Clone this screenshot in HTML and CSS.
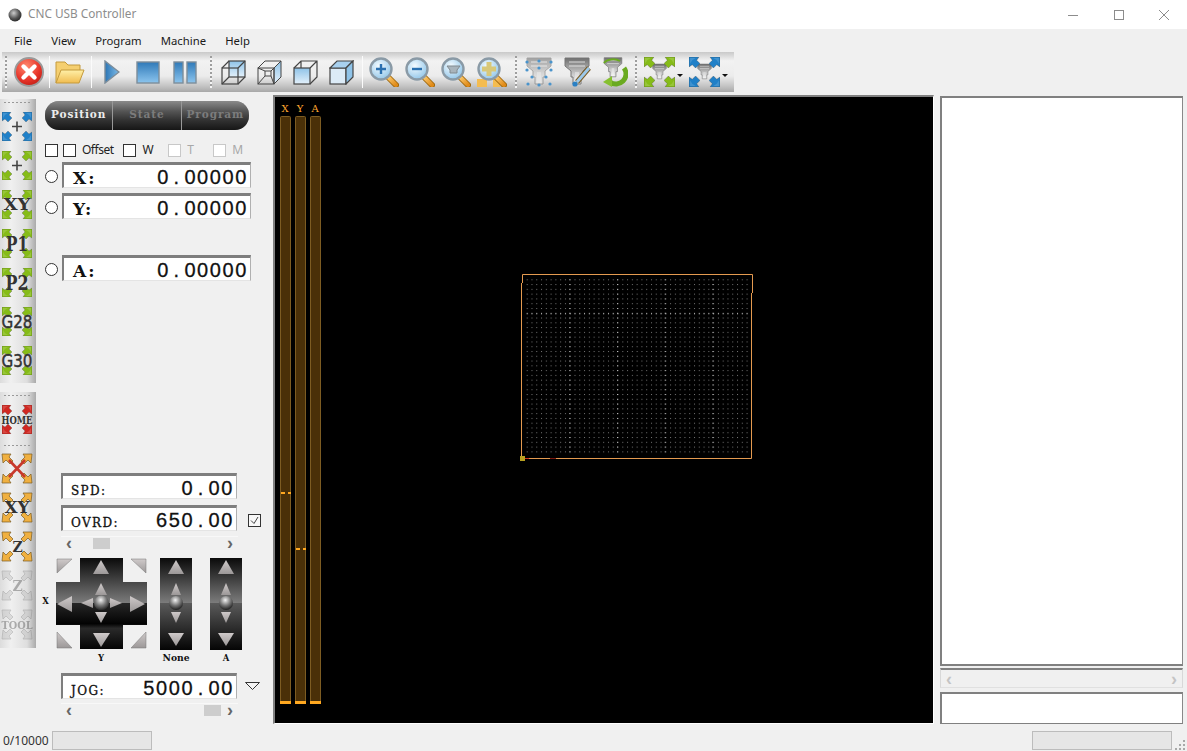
FILE: index.html
```html
<!DOCTYPE html>
<html lang="en">
<head>
<meta charset="utf-8">
<title>CNC USB Controller</title>
<link rel="stylesheet" href="styles.css">
</head>
<body>
<svg class="defs" aria-hidden="true">
  <defs>
    <linearGradient id="gBlue" x1="0" y1="0" x2="0" y2="1"><stop offset="0" stop-color="#2f79b8"/><stop offset="1" stop-color="#8cc5ee"/></linearGradient>
    <linearGradient id="gBlueH" x1="0" y1="0" x2="1" y2="0"><stop offset="0" stop-color="#2c75b4"/><stop offset="1" stop-color="#7dbbe8"/></linearGradient>
    <linearGradient id="gFace" x1="0" y1="0" x2="0" y2="1"><stop offset="0" stop-color="#8fc3e8"/><stop offset="1" stop-color="#e4f1fb"/></linearGradient>
    <linearGradient id="gFolder" x1="0" y1="0" x2="0" y2="1"><stop offset="0" stop-color="#fff0a8"/><stop offset="1" stop-color="#f0bc50"/></linearGradient>
    <radialGradient id="gRed" cx=".4" cy=".3" r=".8"><stop offset="0" stop-color="#ff8a70"/><stop offset=".6" stop-color="#e8352a"/><stop offset="1" stop-color="#b81810"/></radialGradient>
    <radialGradient id="gLens" cx=".4" cy=".35" r=".7"><stop offset="0" stop-color="#f4fbff"/><stop offset="1" stop-color="#8ec4e8"/></radialGradient>
    <linearGradient id="gHandle" x1="0" y1="0" x2="1" y2="1"><stop offset="0" stop-color="#ffd27a"/><stop offset="1" stop-color="#e08a18"/></linearGradient>
    <linearGradient id="gTool" x1="0" y1="0" x2="0" y2="1"><stop offset="0" stop-color="#6e6e6e"/><stop offset=".6" stop-color="#c8c8c8"/><stop offset="1" stop-color="#f0f0f0"/></linearGradient>
    <linearGradient id="gUp" gradientUnits="userSpaceOnUse" x1="0" y1="558" x2="0" y2="603"><stop offset="0" stop-color="#0a0a0a"/><stop offset="1" stop-color="#7c7c7c"/></linearGradient>
    <linearGradient id="gDown" gradientUnits="userSpaceOnUse" x1="0" y1="603" x2="0" y2="649"><stop offset="0" stop-color="#262626"/><stop offset=".45" stop-color="#030303"/><stop offset=".55" stop-color="#2a2a2a"/><stop offset="1" stop-color="#050505"/></linearGradient>
    <linearGradient id="gStripDown" gradientUnits="userSpaceOnUse" x1="0" y1="603" x2="0" y2="650"><stop offset="0" stop-color="#5a5a5a"/><stop offset="1" stop-color="#050505"/></linearGradient>
    <linearGradient id="gTri" x1="0" y1="0" x2="0" y2="1"><stop offset="0" stop-color="#cfcaca"/><stop offset="1" stop-color="#9c9898"/></linearGradient>
    <radialGradient id="gBall" cx=".45" cy=".3" r=".75"><stop offset="0" stop-color="#f2f2f2"/><stop offset=".5" stop-color="#777"/><stop offset="1" stop-color="#111"/></radialGradient>
    <radialGradient id="gApp" cx=".4" cy=".35" r=".7"><stop offset="0" stop-color="#ccc"/><stop offset=".6" stop-color="#555"/><stop offset="1" stop-color="#222"/></radialGradient>
    <pattern id="dots" patternUnits="userSpaceOnUse" x="251.7" y="182.3" width="4.78" height="4.78"><rect width="1" height="1" fill="#747474"/></pattern>
    <pattern id="dotsCol" patternUnits="userSpaceOnUse" x="294.3" y="182.3" width="47.7" height="4.78"><rect width="1" height="1" fill="#c4c4c4"/></pattern>
    <pattern id="dotsRow" patternUnits="userSpaceOnUse" x="251.7" y="216.3" width="4.78" height="400"><rect width="1" height="1" fill="#c4c4c4"/></pattern>

    <symbol id="ar" viewBox="0 0 10 10"><polygon points="0,0 9,0 7,3 10,6 6,10 3,7 0,9" fill="currentColor" stroke="#4a4a4a" stroke-opacity=".5" stroke-width=".6"/><polygon points="1,1 6,1 3,3 1,6" fill="#fff" opacity=".15"/></symbol>
    <symbol id="four" viewBox="0 0 36 39">
      <use href="#ar" x="2" y="5" width="10" height="10"/>
      <use href="#ar" width="10" height="10" transform="translate(32 5) scale(-1 1)"/>
      <use href="#ar" width="10" height="10" transform="translate(2 34) scale(1 -1)"/>
      <use href="#ar" width="10" height="10" transform="translate(32 34) scale(-1 -1)"/>
    </symbol>
    <symbol id="dia" viewBox="0 0 36 39">
      <g fill="#f0b040" stroke="#7a5a20" stroke-width=".7">
        <polygon points="2,5 11,5 9,8 13,12 10,15 6,11 3,14"/>
        <polygon points="32,5 23,5 25,8 21,12 24,15 28,11 31,14"/>
        <polygon points="2,34 11,34 9,31 13,27 10,24 6,28 3,25"/>
        <polygon points="32,34 23,34 25,31 21,27 24,24 28,28 31,25"/>
      </g>
    </symbol>
    <symbol id="nozzle" viewBox="0 0 30 30">
      <path d="M3 1h24v8l-6 5v6h-2v7h-8v-7H9v-6L3 9z" fill="url(#gTool)" stroke="#777" stroke-width="1"/>
      <path d="M7 5h16M7 9h16M14 15v11M16 15v11" stroke="#fff" stroke-width="1" opacity=".7"/>
    </symbol>
    <symbol id="mag" viewBox="0 0 30 30">
      <path d="M18 19l9 9" stroke="#a06a10" stroke-width="6" stroke-linecap="round"/>
      <path d="M18 19l9 9" stroke="url(#gHandle)" stroke-width="4" stroke-linecap="round"/>
      <circle cx="12" cy="12" r="10.5" fill="url(#gLens)" stroke="#8a9aa6" stroke-width="2.4"/>
    </symbol>
  </defs>
</svg>

<header class="titlebar">
  <svg class="app-icon" width="14" height="14" viewBox="0 0 14 14"><circle cx="7" cy="7" r="6.5" fill="url(#gApp)"/></svg>
  <span class="title">CNC USB Controller</span>
  <div class="winctl">
    <button class="winbtn"><svg width="10" height="10" viewBox="0 0 10 10"><path d="M0 5.5h10" stroke="#8c8c8c"/></svg></button>
    <button class="winbtn"><svg width="10" height="10" viewBox="0 0 10 10"><rect x=".5" y=".5" width="9" height="9" fill="none" stroke="#8c8c8c"/></svg></button>
    <button class="winbtn"><svg width="10" height="10" viewBox="0 0 10 10"><path d="M0 0l10 10M10 0L0 10" stroke="#8c8c8c"/></svg></button>
  </div>
</header>

<nav class="menubar">
  <span>File</span><span>View</span><span>Program</span><span>Machine</span><span>Help</span>
</nav>

<div class="toolbar">
  <span class="grip"></span>
  <svg class="ti close" width="30" height="30" viewBox="0 0 30 30"><circle cx="15" cy="15" r="14" fill="url(#gRed)" stroke="#9a9a9a" stroke-width="2"/><path d="M9.5 9.5l11 11M20.5 9.5l-11 11" stroke="#fff" stroke-width="4.4" stroke-linecap="round"/></svg>
  <span class="sep s1"></span>
  <svg class="ti folder" width="30" height="26" viewBox="0 0 30 26"><path d="M1 24V3h9l3 3h12v5" fill="#f5cf70" stroke="#c49a3c"/><path d="M1 24l5-13h23l-5 13z" fill="url(#gFolder)" stroke="#c49a3c"/></svg>
  <span class="sep s2"></span>
  <svg class="ti play" width="16" height="24" viewBox="0 0 16 24"><polygon points="1,1 15,12 1,23" fill="url(#gBlueH)" stroke="#7d8d9a" stroke-width="1.4"/></svg>
  <svg class="ti stop" width="24" height="23" viewBox="0 0 24 23"><rect x="1" y="1" width="22" height="21" fill="url(#gBlue)" stroke="#7d8d9a" stroke-width="1.4"/></svg>
  <svg class="ti pause" width="24" height="23" viewBox="0 0 24 23"><rect x="1" y="1" width="9" height="21" fill="url(#gBlue)" stroke="#7d8d9a" stroke-width="1.4"/><rect x="14" y="1" width="9" height="21" fill="url(#gBlue)" stroke="#7d8d9a" stroke-width="1.4"/></svg>
  <span class="grip g2"></span>
  <svg class="ti cube c1" width="25" height="25" viewBox="0 0 25 25"><g fill="none" stroke="#444" stroke-width="1.2"><rect x="8" y="1" width="16" height="16" fill="url(#gFace)"/><rect x="1" y="8" width="16" height="16"/><path d="M1 8l7-7M17 8l7-7M17 24l7-7M1 24l7-7"/></g></svg>
  <svg class="ti cube" width="25" height="25" viewBox="0 0 25 25"><g fill="none" stroke="#444" stroke-width="1"><path d="M17 8l7-7v16l-7 7z" fill="url(#gFace)"/><rect x="1" y="8" width="16" height="16"/><path d="M1 8l7-7h16M1 24l7-8M17 24l-3-8M8 11h6v5H8zM17 8l-3 3M1 8l7 3"/></g></svg>
  <svg class="ti cube" width="25" height="25" viewBox="0 0 25 25"><g fill="none" stroke="#444" stroke-width="1.2"><rect x="1" y="8" width="16" height="16" fill="url(#gFace)"/><path d="M1 8l7-7h16v16l-7 7M17 8l7-7M8 1v7"/></g></svg>
  <svg class="ti cube" width="25" height="25" viewBox="0 0 25 25"><g stroke="#444" stroke-width="1.2"><rect x="1" y="8" width="16" height="16" fill="#dcebf7"/><path d="M1 8l7-7h16l-7 7z" fill="#a8d0ee"/><path d="M17 8l7-7v16l-7 7z" fill="#8fc3e8"/></g></svg>
  <span class="sep s3"></span>
  <svg class="ti mg m1" width="30" height="30" viewBox="0 0 30 30"><use href="#mag" width="30" height="30"/><path d="M7 12h10M12 7v10" stroke="#2a70b0" stroke-width="2.4"/></svg>
  <svg class="ti mg" width="30" height="30" viewBox="0 0 30 30"><use href="#mag" width="30" height="30"/><path d="M7 12h10" stroke="#2a70b0" stroke-width="2.4"/></svg>
  <svg class="ti mg" width="30" height="30" viewBox="0 0 30 30"><use href="#mag" width="30" height="30"/><path d="M6 9h13l-3 4v3H9v-3z" fill="#a8b4bc" stroke="#808a90"/></svg>
  <svg class="ti mg" width="30" height="30" viewBox="0 0 30 30"><rect x="0" y="22" width="10" height="8" fill="#f4bc50"/><rect x="16" y="22" width="7" height="8" fill="#f4bc50"/><use href="#mag" width="30" height="30"/><path d="M12 5v14M5 12h14" stroke="#d8c878" stroke-width="5"/></svg>
  <span class="grip g3"></span>
  <svg class="ti nz n1" width="30" height="30" viewBox="0 0 30 30"><use href="#nozzle" width="30" height="30" opacity=".6"/><g fill="#4a94cc"><circle cx="3" cy="5" r="1.6"/><circle cx="27" cy="5" r="1.6"/><circle cx="15" cy="4" r="1.6"/><circle cx="3" cy="13" r="1.6"/><circle cx="27" cy="13" r="1.6"/><circle cx="8" cy="20" r="1.6"/><circle cx="22" cy="20" r="1.6"/><circle cx="15" cy="11" r="1.6"/><circle cx="4" cy="27" r="1.6"/><circle cx="15" cy="28" r="1.6"/><circle cx="26" cy="27" r="1.6"/></g></svg>
  <svg class="ti nz" width="30" height="30" viewBox="0 0 30 30"><use href="#nozzle" width="30" height="30"/><path d="M27 11L15 25" stroke="#7a5a20" stroke-width="5"/><path d="M27 11L15 25" stroke="#9cc8ea" stroke-width="3"/><circle cx="13" cy="27" r="2.6" fill="#2a80c4"/></svg>
  <svg class="ti nz n3" width="30" height="30" viewBox="0 0 30 30"><use href="#nozzle" width="26" height="22" x="2" y="0"/><path d="M26 11a10 10 0 0 1-14 14" fill="none" stroke="#6aaa20" stroke-width="5"/><polygon points="14,19 14,30 5,25" fill="#86c030"/><path d="M6 6a10 6 0 0 1 16-2" fill="none" stroke="#6aaa20" stroke-width="2"/></svg>
  <span class="grip g4"></span>
  <svg class="ti nav green" width="31" height="30" viewBox="0 0 31 30"><use href="#nozzle" x="7" y="5" width="17" height="20"/><use href="#ar" x="0" y="0" width="11" height="11"/><use href="#ar" width="11" height="11" transform="translate(31 0) scale(-1 1)"/><use href="#ar" width="11" height="11" transform="translate(0 30) scale(1 -1)"/><use href="#ar" width="11" height="11" transform="translate(31 30) scale(-1 -1)"/></svg>
  <span class="caret"></span>
  <svg class="ti nav blue" width="31" height="30" viewBox="0 0 31 30"><use href="#nozzle" x="7" y="5" width="17" height="20"/><use href="#ar" x="0" y="0" width="11" height="11"/><use href="#ar" width="11" height="11" transform="translate(31 0) scale(-1 1)"/><use href="#ar" width="11" height="11" transform="translate(0 30) scale(1 -1)"/><use href="#ar" width="11" height="11" transform="translate(31 30) scale(-1 -1)"/></svg>
  <span class="caret"></span>
</div>

<main class="main">
  <aside class="rail">
    <div class="railgroup rg1">
      <span class="railgrip"></span>
      <svg class="rb blue" viewBox="0 0 36 39"><use href="#four" width="36" height="39"/><path d="M12 19.500h10M17 14.500v10" stroke="#444" stroke-width="1.6"/></svg>
      <svg class="rb green" viewBox="0 0 36 39"><use href="#four" width="36" height="39"/><path d="M12 19.500h10M17 14.500v10" stroke="#444" stroke-width="1.6"/></svg>
      <svg class="rb green" viewBox="0 0 36 39"><use href="#four" width="36" height="39"/><text class="rt serif" x="17" y="25" textLength="27" lengthAdjust="spacingAndGlyphs">XY</text></svg>
      <svg class="rb green" viewBox="0 0 36 39"><use href="#four" width="36" height="39"/><text class="rt serif big" x="17" y="27" textLength="22" lengthAdjust="spacingAndGlyphs">P1</text></svg>
      <svg class="rb green" viewBox="0 0 36 39"><use href="#four" width="36" height="39"/><text class="rt serif big" x="17" y="27" textLength="23" lengthAdjust="spacingAndGlyphs">P2</text></svg>
      <svg class="rb green" viewBox="0 0 36 39"><use href="#four" width="36" height="39"/><text class="rt sans" x="17" y="26" textLength="31" lengthAdjust="spacingAndGlyphs">G28</text></svg>
      <svg class="rb green" viewBox="0 0 36 39"><use href="#four" width="36" height="39"/><text class="rt sans" x="17" y="26" textLength="31" lengthAdjust="spacingAndGlyphs">G30</text></svg>
    </div>
    <div class="railgroup rg2">
      <span class="railgrip"></span>
      <svg class="rb red" viewBox="0 0 36 39"><use href="#four" width="36" height="39"/><text class="rt serif small" x="17" y="23.500" textLength="31" lengthAdjust="spacingAndGlyphs">HOME</text></svg>
      <span class="railgrip g-mid"></span>
      <svg class="rb" viewBox="0 0 36 39"><use href="#dia" width="36" height="39"/><path d="M9 11l16 17M25 11L9 28" stroke="#c8382c" stroke-width="2.6"/></svg>
      <svg class="rb" viewBox="0 0 36 39"><use href="#dia" width="36" height="39"/><text class="rt serif" x="17" y="25" textLength="25" lengthAdjust="spacingAndGlyphs">XY</text></svg>
      <svg class="rb" viewBox="0 0 36 39"><use href="#dia" width="36" height="39"/><text class="rt serif z" x="17.500" y="25">Z</text></svg>
      <svg class="rb off" viewBox="0 0 36 39"><use href="#dia" width="36" height="39"/><text class="rt serif z" x="17.500" y="25">Z</text></svg>
      <svg class="rb off" viewBox="0 0 36 39"><use href="#dia" width="36" height="39"/><text class="rt serif small" x="17" y="23.500" textLength="31" lengthAdjust="spacingAndGlyphs">TOOL</text></svg>
    </div>
  </aside>

  <section class="panel">
    <div class="tabs">
      <span class="tab active">Position</span>
      <span class="tab">State</span>
      <span class="tab">Program</span>
    </div>
    <div class="checks">
      <span class="cb"></span>
      <span class="cb"></span>
      <span class="cl">Offset</span>
      <span class="cb w"></span>
      <span class="cl">W</span>
      <span class="cb dis t"></span>
      <span class="cl dis">T</span>
      <span class="cb dis m"></span>
      <span class="cl dis">M</span>
    </div>
    <div class="axes">
      <div class="axis"><span class="radio"></span><div class="lcd"><span class="lbl">X:</span><span class="val">0<i>.</i>00000</span></div></div>
      <div class="axis"><span class="radio"></span><div class="lcd"><span class="lbl">Y:</span><span class="val">0<i>.</i>00000</span></div></div>
      <div class="axis axis-a"><span class="radio"></span><div class="lcd"><span class="lbl">A:</span><span class="val">0<i>.</i>00000</span></div></div>
    </div>
    <div class="lower">
      <div class="lcd wide"><span class="lbl sm">SPD:</span><span class="val">0<i>.</i>00</span></div>
      <div class="ovrd">
        <div class="lcd wide"><span class="lbl sm">OVRD:</span><span class="val">650<i>.</i>00</span></div>
        <svg class="tick" width="13" height="13" viewBox="0 0 13 13"><rect x=".5" y=".5" width="12" height="12" fill="#f8f8f8" stroke="#333"/><path d="M3 6.500l3 3 4-6.500" fill="none" stroke="#444"/></svg>
      </div>
      <div class="hs"><span class="chev">‹</span><span class="thumb th1"></span><span class="chev">›</span></div>
      <svg class="pad" width="205" height="110" viewBox="40 555 205 110">
        <path d="M80 558h43v24h24v21H56v-21h24z" fill="url(#gUp)"/>
        <path d="M56 603h91v22h-24v24H80v-24H56z" fill="url(#gDown)"/>
        <g fill="url(#gTri)" stroke="#777" stroke-width=".5">
          <polygon points="57,559 72,559 57,573"/>
          <polygon points="131,559 146,559 146,573"/>
          <polygon points="57,632 72,648 57,648"/>
          <polygon points="146,632 146,648 131,648"/>
        </g>
        <g fill="url(#gTri)">
          <polygon points="101,560 109,574 93,574"/>
          <polygon points="101,583 107,595 95,595"/>
          <polygon points="93,633 110,633 101,647"/>
          <polygon points="95,612 107,612 101,623"/>
          <polygon points="57,604 72,596 72,612"/>
          <polygon points="145,604 130,596 130,612"/>
          <polygon points="81,603 93,598 93,608"/>
          <polygon points="122,603 110,598 110,608"/>
        </g>
        <circle cx="101.500" cy="603" r="7.500" fill="url(#gBall)"/>
        <g>
          <rect x="160" y="558" width="32" height="46" fill="url(#gUp)"/>
          <rect x="160" y="603" width="32" height="47" fill="url(#gStripDown)"/>
          <rect x="210" y="558" width="32" height="46" fill="url(#gUp)"/>
          <rect x="210" y="603" width="32" height="47" fill="url(#gStripDown)"/>
        </g>
        <g fill="url(#gTri)">
          <polygon points="176,560 184,574 168,574"/><polygon points="176,583 181,595 171,595"/><polygon points="171,612 181,612 176,623"/><polygon points="168,633 184,633 176,646"/>
          <polygon points="226,560 234,574 218,574"/><polygon points="226,583 231,595 221,595"/><polygon points="221,612 231,612 226,623"/><polygon points="218,633 234,633 226,646"/>
        </g>
        <circle cx="176" cy="603" r="7" fill="url(#gBall)"/>
        <circle cx="226" cy="603" r="7" fill="url(#gBall)"/>
        <text class="padt" x="45.500" y="604">X</text>
        <text class="padt" x="101" y="661">Y</text>
        <text class="padt" x="176" y="661" textLength="27" lengthAdjust="spacingAndGlyphs">None</text>
        <text class="padt" x="226" y="661">A</text>
      </svg>
      <div class="jogrow">
        <div class="lcd wide"><span class="lbl sm">JOG:</span><span class="val">5000<i>.</i>00</span></div>
        <svg class="dropdown" width="15" height="8" viewBox="0 0 15 8"><polygon points=".5,.5 14.500,.5 7.500,7.500" fill="#f4f4f4" stroke="#333"/></svg>
      </div>
      <div class="hs hs2"><span class="chev">‹</span><span class="thumb th2"></span><span class="chev">›</span></div>
    </div>
  </section>

  <section class="view">
    <svg class="scene" width="659" height="627" viewBox="0 0 659 627">
      <g>
        <rect class="bar" x="5.500" y="19.500" width="10" height="587" rx="1"/>
        <rect class="bar" x="20.500" y="19.500" width="10" height="587" rx="1"/>
        <rect class="bar" x="35.500" y="19.500" width="10" height="587" rx="1"/>
      </g>
      <g class="bar-end">
        <rect x="5" y="604" width="11" height="3"/><rect x="20" y="604" width="11" height="3"/><rect x="35" y="604" width="11" height="3"/>
        <rect x="6" y="395" width="4" height="2"/><rect x="13" y="395" width="3" height="2"/>
        <rect x="21" y="451" width="4" height="2"/><rect x="28" y="451" width="3" height="2"/>
      </g>
      <text class="bartxt" x="10" y="15">X</text>
      <text class="bartxt" x="25" y="15">Y</text>
      <text class="bartxt" x="40" y="15">A</text>
      <rect x="249" y="180" width="227" height="178" fill="url(#dots)"/>
      <rect x="249" y="180" width="227" height="178" fill="url(#dotsCol)"/>
      <rect x="249" y="180" width="227" height="178" fill="url(#dotsRow)"/>
      <path class="frame" d="M247.500 186V177.500H477.500V196M476.500 196V361.500H246.500V186"/>
      <rect x="245" y="359" width="5" height="5" fill="#b8a020"/>
      <rect x="250" y="361" width="4" height="1" fill="#d03020"/>
      <rect x="275" y="361" width="6" height="1" fill="#7a1810"/>
    </svg>
  </section>

  <aside class="side">
    <div class="list"></div>
    <div class="sidescroll"><span class="chev">‹</span><span class="chev">›</span></div>
    <div class="input"></div>
  </aside>
</main>

<footer class="status">
  <span class="count">0/10000</span>
  <span class="prog"></span>
  <span class="prog right"></span>
  <svg class="sizegrip" width="11" height="11" viewBox="0 0 11 11"><g fill="#a8a8a8"><rect x="8" y="1" width="2" height="2"/><rect x="4" y="5" width="2" height="2"/><rect x="8" y="5" width="2" height="2"/><rect x="0" y="9" width="2" height="2"/><rect x="4" y="9" width="2" height="2"/><rect x="8" y="9" width="2" height="2"/></g></svg>
</footer>
</body>
</html>
```

FILE: styles.css
```css
* { box-sizing: border-box; }
html, body { margin: 0; height: 100%; }
body {
  width: 1187px; height: 751px; overflow: hidden;
  display: flex; flex-direction: column;
  background: #f0f0f0; color: #111;
  font-family: "Noto Sans", "Liberation Sans", sans-serif; font-size: 12px;
}
.defs { position: absolute; width: 0; height: 0; }
svg { display: block; flex: none; }
.blue { color: #2080c8; }
.green { color: #86bc18; }
.red { color: #d02822; }

.titlebar { height: 29px; background: #fff; display: flex; align-items: center; padding-left: 8px; flex: none; }
.title { margin-left: 6px; padding-bottom: 3px; color: #8d8d8d; font-size: 11.800px; }
.winctl { margin-left: auto; display: flex; }
.winbtn { width: 45.500px; height: 29px; padding: 0; border: 0; background: none; display: flex; align-items: center; justify-content: center; }

.menubar { height: 23px; display: flex; align-items: center; gap: 19.200px; padding-left: 14px; padding-bottom: 1px; flex: none; color: #1a1a1a; font-size: 11.300px; }

.toolbar {
  width: 732px; height: 40px; margin-left: 2px; flex: none;
  display: flex; align-items: center;
  background: linear-gradient(#c9c9c9 0, #f2f2f2 22%, #ececec 60%, #c4c4c4 85%, #a8a8a8 100%);
}
.grip { width: 2px; height: 32px; margin-left: 3px; background: repeating-linear-gradient(#9e9e9e 0 2px, #f4f4f4 2px 4px); flex: none; }
.sep { width: 1px; height: 32px; background: #fbfbfb; flex: none; }
.close { margin-left: 7px; }
.s1 { margin-left: 5px; }
.folder { margin-left: 5px; }
.s2 { margin-left: 6px; }
.play { margin-left: 12px; }
.stop { margin-left: 16px; }
.pause { margin-left: 13px; }
.g2 { margin-left: 13px; }
.c1 { margin-left: 9px; }
.cube + .cube { margin-left: 11px; }
.s3 { margin-left: 8px; }
.m1 { margin-left: 6px; }
.mg + .mg { margin-left: 6px; }
.g3 { margin-left: 8px; }
.n1 { margin-left: 7px; }
.nz + .nz { margin-left: 8px; }
.nz + .nz.n3 { margin-left: 6px; }
.g4 { margin-left: 7px; }
.nav.green { margin-left: 7px; }
.nav.blue { margin-left: 6px; }
.caret { width: 0; height: 0; margin-left: 2px; margin-top: 7px; border: 3px solid transparent; border-top: 3px solid #111; border-bottom: 0; flex: none; }

.main { height: 635px; margin-top: 3px; display: flex; flex: none; }

.rail { width: 36px; display: flex; flex-direction: column; flex: none; padding-top: 4px; gap: 9px; }
.railgroup { background: linear-gradient(90deg, #dcdcdc 0, #f0f0f0 30%, #dedede 75%, #aaaaaa 100%); display: flex; flex-direction: column; }
.rg1 { height: 284px; padding-top: 8px; }
.rg2 { height: 256px; padding-top: 8px; }
.rb { width: 36px; height: 39px; flex: none; overflow: visible; }
.railgrip { height: 1px; margin: -5px 4px 4px; background: repeating-linear-gradient(90deg, #999 0 2px, transparent 2px 4px); flex: none; }
.rg2 .g-mid { margin: 6px 4px 3px; }
.rt { text-anchor: middle; fill: #333; }
.serif { font: bold 16px "DejaVu Serif", serif; }
.big { font-size: 20px; }
.small { font-size: 11px; }
.z { font-size: 14px; }
.sans { font: 18px "DejaVu Sans", sans-serif; fill: #333; stroke: #333; stroke-width: .5px; }
.off { opacity: .35; filter: grayscale(1); }

.panel { width: 237px; flex: none; padding: 6px 0 14px 9px; display: flex; flex-direction: column; }
.tabs { width: 204px; height: 29px; border-radius: 14px; overflow: hidden; display: flex; gap: 1px; background: #999; flex: none; }
.tab {
  flex: 1; display: flex; align-items: center; justify-content: center; padding-bottom: 2px;
  background: linear-gradient(#8a8a8a 0, #555 35%, #333 65%, #161616 100%);
  font: bold 10.500px/1 "DejaVu Serif", serif; letter-spacing: .9px; color: #7c7c7c;
}
.tab.active { color: #ececec; }
.checks { height: 13px; margin-top: 14px; display: flex; align-items: center; flex: none; }
.cb { width: 13px; height: 13px; border: 1px solid #333; background: #fff; flex: none; }
.cb + .cb { margin-left: 5px; }
.cl { margin-left: 6px; font-size: 12px; letter-spacing: -.5px; line-height: 12px; padding-bottom: 2px; color: #222; }
.cb.w { margin-left: 10px; }
.cb.t { margin-left: 15px; }
.cb.m { margin-left: 20px; }
.cb.dis { border-color: #c8c8c8; }
.cl.dis { color: #a8a8a8; }

.axes { margin-top: 5px; display: flex; flex-direction: column; gap: 5px; }
.axis { display: flex; align-items: flex-start; }
.axis-a { margin-top: 31px; }
.radio { width: 13px; height: 13px; margin-top: 8px; border: 1px solid #333; border-radius: 50%; background: #fff; flex: none; }
.lcd {
  width: 189px; height: 26px; margin-left: 4px; padding: 2px 2px 0 9px; flex: none;
  display: flex; justify-content: space-between; align-items: baseline;
  background: #fff;
  border-style: solid; border-width: 3px 1px 1px 2px;
  border-color: #7e7e7e #b0b0b0 #e4e4e4 #7e7e7e;
  line-height: 20px;
}
.lbl { font: bold 17px/20px "DejaVu Serif", serif; letter-spacing: 2px; color: #111; }
.val { font: 20px/20px "Liberation Sans", sans-serif; letter-spacing: 1.6px; color: #111; -webkit-text-stroke: .3px #111; }
.val i { font-style: normal; padding: 0 3.600px; }
.lbl.sm { font: 12px/20px "DejaVu Serif", serif; letter-spacing: 1.400px; -webkit-text-stroke: .3px #111; }

.lower { margin-top: auto; padding-left: 16px; display: flex; flex-direction: column; }
.wide { width: 176px; margin-left: 0; padding-left: 8px; }
.lower > .lcd { margin-bottom: 6px; }
.ovrd { display: flex; align-items: flex-start; }
.tick { margin: 9px 0 0 11px; }
.hs { width: 177px; height: 13px; margin-top: 5px; display: flex; align-items: center; justify-content: space-between; padding: 0 5px; border-top: 1px solid #f8f8f8; flex: none; }
.chev { font: bold 18px/12px "Liberation Sans", sans-serif; color: #666; width: 6px; text-align: center; }
.thumb { height: 11px; width: 17px; background: #cdcdcd; }
.th1 { margin: 0 auto 0 21px; }
.th2 { margin: 0 6px 0 auto; }
.hs2 { margin-top: 4px; }
.pad { margin: 6px 0 0 -21px; }
.padt { font: bold 8.500px "DejaVu Serif", serif; text-anchor: middle; fill: #111; }
.jogrow { margin-top: 8px; display: flex; align-items: flex-start; }
.dropdown { margin: 9px 0 0 8px; }

.view {
  width: 661px; height: 629px; flex: none; background: #000;
  border-style: solid; border-width: 2px 1px 1px 2px; border-color: #808080 #fff #fff #808080;
  overflow: hidden;
}
.bar { fill: #4a3008; stroke: #7d5c22; stroke-width: 1; }
.bar-end { fill: #ffa820; }
.bartxt { font: 10px "DejaVu Serif", serif; fill: #ffa830; text-anchor: middle; }
.frame { fill: none; stroke: #e49a50; stroke-width: 1; }

.side { width: 243px; margin-left: 6px; padding-top: 1px; flex: none; display: flex; flex-direction: column; height: 629px; }
.list { flex: 1; background: #fff; border-style: solid; border-width: 2px 1px 2px 2px; border-color: #808080 #888 #808080 #808080; }
.sidescroll { height: 20px; margin-top: 2px; padding: 0 5px; display: flex; align-items: center; justify-content: space-between; border-style: solid; border-width: 2px 1px 1px 1px; border-color: #808080 #d8d8d8 #e0e0e0 #d8d8d8; flex: none; }
.sidescroll .chev { color: #c4c4c4; }
.input { height: 32px; margin-top: 4px; background: #fff; border-style: solid; border-width: 2px 1px 1px 2px; border-color: #808080 #888 #808080 #808080; flex: none; }

.status { height: 21px; flex: 1; display: flex; align-items: center; padding-left: 3px; }
.count { width: 49px; font-size: 12px; color: #333; flex: none; }
.prog { width: 100px; height: 19px; background: #e6e6e6; border: 1px solid #bcbcbc; flex: none; }
.prog.right { width: 140px; margin-left: auto; }
.sizegrip { margin: 8px 1px 0 3px; }
```
